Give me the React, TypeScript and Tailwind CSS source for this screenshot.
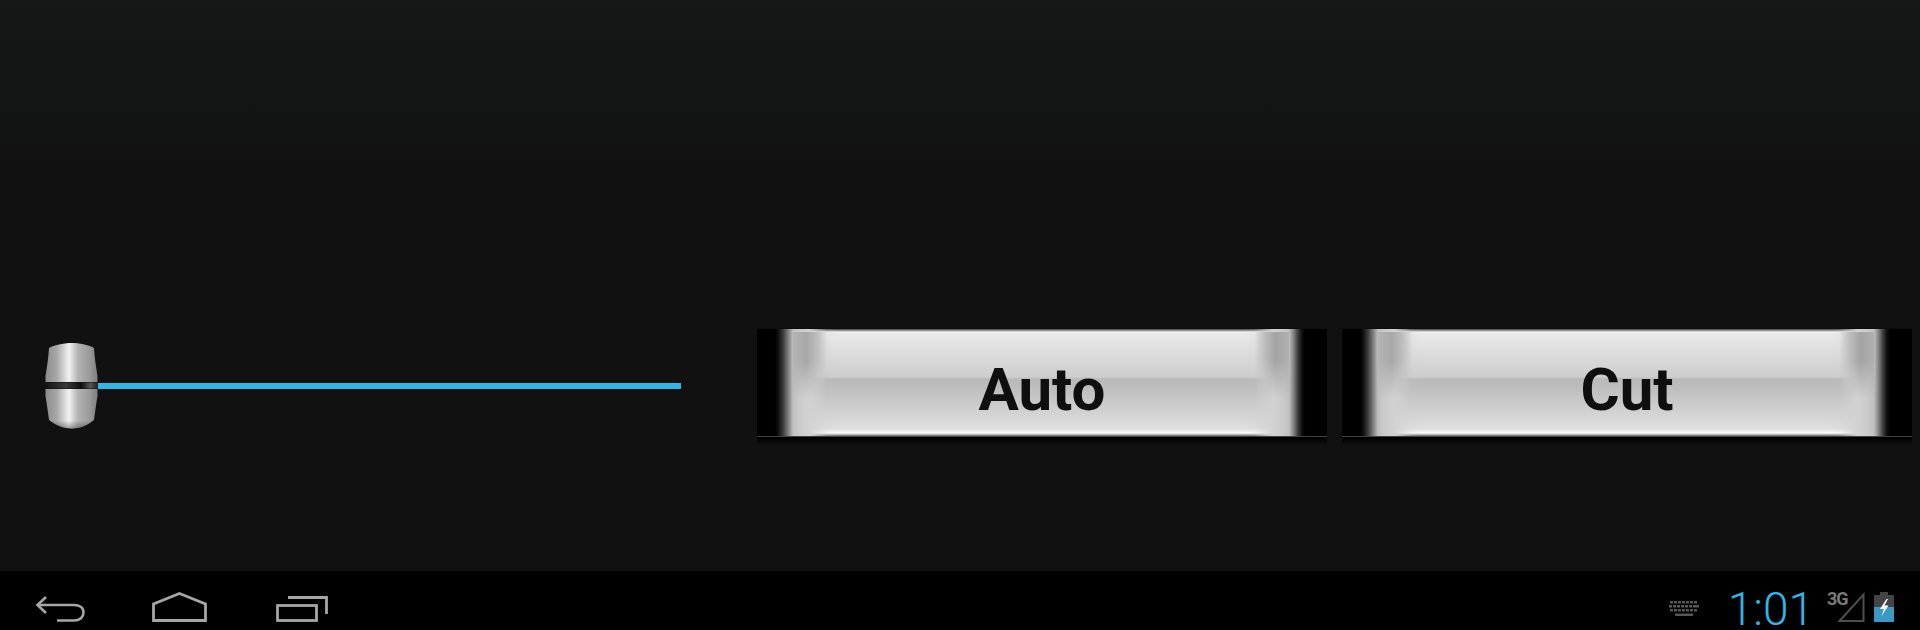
const FACE =
  "bg-[linear-gradient(180deg,#3a3a3a_0px,#f0f0f0_3px,#e9e9e9_5px,#e6e6e6_10px,#cdcdcd_48px,#b9b9b9_50px,#bcbcbc_57px,#d4d4d4_86px,#dedede_99px,#ececec_102px,#ffffff_104px,#a0a0a0_106px,#222222_108px)]";

function BigButton({ label }: { label: string }) {
  return (
    <div className="relative h-[117px] w-[570px] overflow-hidden bg-[linear-gradient(180deg,#101010_0px,#000_4px,#000_110px,#111111_117px)]">
      <div className="h-full pt-[1px] pb-[8px]">
        <div className={`flex h-full items-center justify-center pt-[13px] ${FACE}`}>
          <span className="font-['Roboto',sans-serif] text-[60px] leading-none font-bold text-[#0f0f0f]">{label}</span>
        </div>
      </div>
      {/* rounded ends of the key */}
      <div className="absolute top-[1px] bottom-[9px] left-0 w-[90px] bg-[linear-gradient(90deg,#000_18px,#0e0e0e_21px,#3c3c3c_26px,#7c7c7c_31px,#c0c0c0_36px,#cacaca_42px,#d2d2d2_52px,#c8c8c820_70px,#c8c8c800_80px)]" />
      <div className="absolute top-[1px] bottom-[9px] right-0 w-[90px] bg-[linear-gradient(270deg,#000_22px,#0e0e0e_25px,#3c3c3c_29px,#7c7c7c_33px,#c0c0c0_38px,#cacaca_44px,#d2d2d2_54px,#c8c8c820_72px,#c8c8c800_82px)]" />
      <div className="absolute top-[4px] left-[36px] h-[66px] w-[34px] bg-[linear-gradient(90deg,#b4b4b4,#a8a8a8_40%,#bcbcbc_70%,#e0e0e000)] [mask-image:linear-gradient(180deg,#000_45%,transparent)]" />
      <div className="absolute top-[4px] right-[38px] h-[66px] w-[34px] bg-[linear-gradient(270deg,#b0b0b0,#a4a4a4_40%,#bcbcbc_70%,#e0e0e000)] [mask-image:linear-gradient(180deg,#000_45%,transparent)]" />
    </div>
  );
}

function Thumb() {
  return (
    <svg width="53" height="86" viewBox="0 0 53 86" className="shrink-0">
      <defs>
        <linearGradient id="metal" x1="0" x2="1" y1="0" y2="0">
          <stop offset="0" stopColor="#8c8c8c" />
          <stop offset="0.22" stopColor="#a8a8a8" />
          <stop offset="0.45" stopColor="#f2f2f2" />
          <stop offset="0.62" stopColor="#b4b4b4" />
          <stop offset="0.85" stopColor="#9a9a9a" />
          <stop offset="1" stopColor="#7e7e7e" />
        </linearGradient>
        <linearGradient id="band" x1="0" x2="1" y1="0" y2="0">
          <stop offset="0" stopColor="#111" />
          <stop offset="0.4" stopColor="#3a3a3a" />
          <stop offset="0.68" stopColor="#0c0c0c" />
          <stop offset="0.85" stopColor="#555" />
          <stop offset="1" stopColor="#222" />
        </linearGradient>
        <linearGradient id="shade" x1="0" x2="0" y1="0" y2="1">
          <stop offset="0.8" stopColor="#000" stopOpacity="0" />
          <stop offset="1" stopColor="#000" stopOpacity="0.35" />
        </linearGradient>
      </defs>
      <path d="M4 5 C10 1.5 20 0 27 0 C34 0 43 1.5 49 5 C49.5 14 51 24 52.5 33 L52.5 39 L0.5 39 L0.5 33 C2 24 3.5 14 4 5 Z" fill="url(#metal)" />
      <rect x="0" y="39.5" width="53" height="6" fill="url(#band)" />
      <path d="M0.5 46 L52.5 46 L52.5 53 C51 62 50 70 49 77 C43 82 35 85.5 27 85.5 C19 85.5 10 82 4 77 C3 70 2 62 0.5 53 Z" fill="url(#metal)" />
      <path d="M0.5 46 L52.5 46 L52.5 53 C51 62 50 70 49 77 C43 82 35 85.5 27 85.5 C19 85.5 10 82 4 77 C3 70 2 62 0.5 53 Z" fill="url(#shade)" />
    </svg>
  );
}

function NavIcons() {
  return (
    <div className="flex h-full items-end pb-[8px] text-[#a6a6a6]">
      <svg width="50" height="26" viewBox="0 0 50 26" fill="none" stroke="currentColor" strokeWidth="2.6" className="ml-[35px]">
        <path d="M11 1 L2.5 9 L11 17" />
        <path d="M2.5 9 H39 C45 9 48.5 12 48.5 16.5 C48.5 21 45 24.5 39 24.5 H22" />
      </svg>
      <svg width="55" height="30" viewBox="0 0 55 30" fill="none" stroke="currentColor" strokeWidth="2.8" className="ml-[67px]">
        <path d="M27.5 1.5 L53.5 12 V28.5 H1.5 V12 Z" />
      </svg>
      <svg width="52" height="26" viewBox="0 0 52 26" fill="none" stroke="currentColor" strokeWidth="2.8" className="ml-[69px]">
        <rect x="1.5" y="9.5" width="39" height="15" />
        <path d="M12 1.5 H50.5 V18" />
      </svg>
    </div>
  );
}

function StatusIcons() {
  return (
    <div className="mt-[17px] flex items-center pr-[26px]">
      <svg width="30" height="15" viewBox="0 0 30 15" className="-mt-[2px]" fill="#565656">
        {[0, 4, 8, 12, 16, 20, 24].map((x) => (
          <rect key={`a${x}`} x={x + 1} y="0" width="3" height="2.5" />
        ))}
        {[0, 4, 8, 12, 16, 20, 24, 27].map((x) => (
          <rect key={`b${x}`} x={x} y="4" width="3" height="2.5" />
        ))}
        {[0, 4, 8, 12, 16, 20, 24].map((x) => (
          <rect key={`c${x}`} x={x + 1} y="8" width="3" height="2.5" />
        ))}
        <rect x="6" y="12.5" width="18" height="2.5" />
      </svg>
      <span className="ml-[29px] font-['Roboto',sans-serif] text-[46px] leading-[38px] font-light text-[#33b5e5]">1:01</span>
      <div className="relative -mt-[4px] ml-[13px] h-[30px] w-[38px]">
        <span className="absolute top-[-2px] left-0 font-['Roboto',sans-serif] text-[18px] leading-[17px] font-bold tracking-[-1px] text-[#7a7a7a]">3G</span>
        <svg width="28" height="30" viewBox="0 0 28 30" className="absolute top-0 right-0" fill="none" stroke="#4e4e4e" strokeWidth="2">
          <path d="M26.5 2.5 V29 H2.5 Z" />
        </svg>
      </div>
      <svg width="20" height="30" viewBox="0 0 20 30" className="-mt-[4px] ml-[9px]">
        <rect x="6" y="0" width="8" height="3" fill="#444444" />
        <rect x="0" y="3" width="20" height="12" fill="#444444" />
        <rect x="0" y="15" width="20" height="15" fill="#3a9ac4" />
        <path d="M12.5 7 L6 17 H10 L7.5 24 L14.5 13.5 H10.5 L14 7 Z" fill="#ffffff" />
      </svg>
    </div>
  );
}

export default function App() {
  return (
    <div className="flex h-[630px] w-[1920px] flex-col overflow-hidden bg-[linear-gradient(180deg,#151817_0px,#111111_180px)]">
      <main className="flex-1 pt-[328px]">
        <div className="flex items-center pl-[45px]">
          <div className="flex items-center pb-[2px]">
            <Thumb />
            <div className="h-[6px] w-[583px] bg-[#33b5e5]" />
          </div>
          <div className="ml-[76px] flex gap-[15px]">
            <BigButton label="Auto" />
            <BigButton label="Cut" />
          </div>
        </div>
      </main>
      <footer className="flex h-[59px] items-center justify-between bg-black">
        <NavIcons />
        <StatusIcons />
      </footer>
    </div>
  );
}
